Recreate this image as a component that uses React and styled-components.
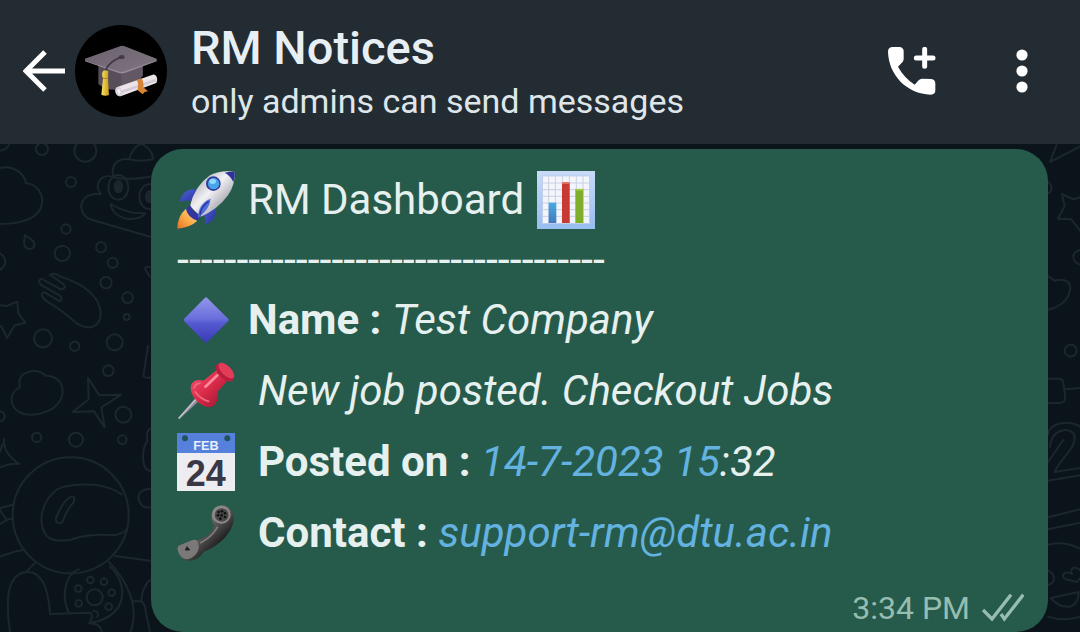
import React from "react";
import styled, { createGlobalStyle } from "styled-components";

const GlobalStyle = createGlobalStyle`
  *, *::before, *::after { box-sizing: border-box; }
  body {
    margin: 0;
    background: #0b141a;
    color: #e6f0ef;
    font-family: Roboto, "Liberation Sans", sans-serif;
  }
`;

const Page = styled.div`
  display: flex;
  flex-direction: column;
  min-height: 100vh;
  overflow: hidden;
`;

const Header = styled.header`
  display: flex;
  align-items: center;
  padding: 16px 52px 18px 23px;
  background: #242c33;
`;

const IconButton = styled.button`
  display: flex;
  flex: none;
  padding: 0;
  border: 0;
  background: none;
  color: #fff;
  cursor: pointer;
  margin-left: ${(p) => p.$gap || 0}px;
  svg { display: block; }
`;

const Avatar = styled.svg`
  flex: none;
  width: 92px;
  height: 92px;
  margin: 0 24px 0 10px;
  border-radius: 50%;
  background: #000;
`;

const Titles = styled.div`
  flex: 1;
  min-width: 0;
  padding-top: 4px;
  white-space: nowrap;
`;

const Title = styled.h1`
  margin: 0;
  font-size: 47px;
  line-height: 56px;
  font-weight: 500;
  color: #e8eff4;
`;

const Subtitle = styled.p`
  margin: 0;
  font-size: 34px;
  line-height: 50px;
  color: #dfe6ea;
`;

const Chat = styled.main`
  position: relative;
  flex: 1;
  padding: 5px 32px 0 151px;
`;

const Wallpaper = styled.svg`
  position: absolute;
  inset: 0;
  width: 100%;
  height: 100%;
  fill: none;
  stroke: #1c262d;
  stroke-width: 6;
  stroke-linecap: round;
  stroke-linejoin: round;
`;

const Bubble = styled.article`
  position: relative;
  padding: 15px 24px 4px 26px;
  border-radius: 32px;
  background: #265b4b;
`;

const Line = styled.p`
  display: flex;
  align-items: center;
  gap: ${(p) => (p.$wide ? 23 : 13)}px;
  margin: 0;
  font-size: 42px;
  line-height: 71px;
  white-space: pre;
`;

const Divider = styled.p`
  margin: 0;
  font-size: 43px;
  line-height: 49px;
  white-space: pre;
`;

const Emoji = styled.svg`
  flex: none;
  width: 58px;
  height: 58px;
  overflow: visible;
`;

const Link = styled.a`
  color: #64b2e0;
  text-decoration: none;
`;

const Meta = styled.footer`
  display: flex;
  justify-content: flex-end;
  align-items: center;
  gap: 12px;
  margin-top: 20px;
  font-size: 32px;
  line-height: 40px;
  color: #97bdb0;
`;

function Doodles() {
  return (
    <Wallpaper viewBox="0 144 1080 488" preserveAspectRatio="xMinYMin slice" aria-hidden="true">
      <g transform="translate(0 140) scale(.33333)">
        <circle cx="126" cy="27" r="18" />
        <circle cx="256" cy="32" r="33" />
        <path d="M0 32Q18 30 27 15M0 84C35 74 72 96 78 130C110 132 130 162 126 190C120 232 72 252 0 252" />
        <circle cx="213" cy="126" r="15" />
        <circle cx="198" cy="267" r="14" />
        <path d="M75 286C95 296 108 308 102 320C94 332 72 328 72 306Z" />
        <circle cx="187" cy="340" r="23" />
        <circle cx="303" cy="322" r="15" />
        <circle cx="338" cy="368" r="15" />
        <circle cx="318" cy="428" r="17" />
        <circle cx="383" cy="473" r="16" />
        <circle cx="380" cy="531" r="9" />
        <circle cx="129" cy="595" r="27" />
        <circle cx="224" cy="619" r="14" />
        <circle cx="344" cy="607" r="24" />
        <circle cx="325" cy="692" r="16" />
        <path d="M0 340Q16 352 16 365T0 390" />
        <path d="M0 496L20 498L52 485L55 520L76 548L44 556L21 594L5 560L0 558" />
        <path d="M150 404Q165 396 182 410C230 425 275 450 295 490C312 530 296 565 262 562C225 560 200 515 150 490C120 472 120 455 135 458L180 484Q190 476 178 466L122 434Q112 420 124 416L182 448Q202 446 190 432Z" />
        <path d="M450 290L270 238C225 215 240 155 302 162C278 128 310 98 340 112C330 70 360 52 388 58C396 20 425 8 430 14Q462 34 458 58Q420 66 388 58M340 112Q390 122 450 110" />
        <ellipse cx="355" cy="142" rx="30" ry="37" />
        <ellipse cx="355" cy="140" rx="11" ry="17" fill="#1c262d" />
        <ellipse cx="448" cy="170" rx="30" ry="37" />
        <ellipse cx="448" cy="170" rx="10" ry="17" fill="#1c262d" />
        <path d="M332 192Q380 222 436 220Q420 240 380 236Q336 225 332 192Z" />
        <path d="M450 382Q430 376 438 392L450 410M444 618L430 708Q440 716 450 712" />
      </g>
      <g transform="translate(0 380) scale(.33333)">
        <path d="M60 22C20 40 30 90 70 101C115 112 180 90 188 40C190 5 165 -14 137 -13C110 -38 55 -28 58 12Z" />
        <path d="M264 -6L298 46L364 44L304 82L314 142L282 94L218 96L266 58Z" />
        <circle cx="370" cy="104" r="24" />
        <circle cx="367" cy="179" r="13" />
        <circle cx="228" cy="179" r="21" />
        <circle cx="110" cy="172" r="14" />
        <path d="M0 94Q15 98 14 110T0 124M12 176Q8 220 58 252Q28 248 0 262M0 216L8 192" />
        <circle cx="212" cy="406" r="174" />
        <path d="M364 343C320 310 250 308 190 320C145 335 120 390 125 430C132 480 160 486 210 480C260 460 310 465 345 465Q365 464 382 446" />
        <path d="M214 350Q228 348 220 368Q200 390 190 420Q184 434 172 428Q162 420 176 396Q195 355 214 350Z" />
        <path d="M0 384L38 374M0 390L20 420L0 432M20 420L40 414M0 530Q35 515 68 510M106 548L78 576C40 580 25 620 24 660Q22 710 30 756M78 576C120 572 145 615 150 702L268 698Q284 700 268 730Q300 730 306 756M345 528L450 542M326 545C380 600 420 680 392 756M400 664H424Q426 620 450 600M424 664Q436 672 436 690L450 756" />
        <path d="M206 698C180 640 200 580 236 568M330 560C365 590 378 640 356 680Q330 720 272 728" />
        <circle cx="284" cy="652" r="24" />
        <circle cx="271" cy="600" r="10" /><circle cx="312" cy="605" r="10" />
        <circle cx="335" cy="638" r="10" /><circle cx="326" cy="680" r="10" />
        <circle cx="235" cy="626" r="10" /><circle cx="236" cy="670" r="10" />
        <path d="M280 692Q300 695 292 710M450 146Q438 154 442 184Q426 205 430 244Q434 270 450 272M450 326Q412 330 416 358Q422 386 450 382" />
      </g>
      <g transform="translate(1020 140) scale(.33333)">
        <path d="M110 14L90 66L180 20M82 124Q100 138 92 155L82 162" />
        <path d="M180 172L160 178L126 162L134 198L114 236L154 238L180 272" />
        <path d="M180 330Q158 336 160 352T180 374M82 408Q96 414 102 422C140 412 158 430 148 458C142 485 110 504 82 510" />
        <circle cx="152" cy="632" r="18" />
        <path d="M82 716H118Q128 716 130 728L136 774Q134 790 120 788L82 790M134 748L180 744" />
        <path d="M84 884C90 845 150 840 180 860M90 920C94 860 160 860 164 890C166 930 120 955 104 996L180 984M84 966L130 900M84 1022L180 1006M84 1132L180 1108M84 1168L180 1148M84 1214Q130 1202 180 1226M84 1430Q130 1446 180 1430" />
        <path d="M180 1290C155 1270 150 1295 156 1302C130 1290 120 1310 138 1318L172 1326L180 1314M84 1292Q102 1300 102 1315T84 1335M92 1374L176 1356Q176 1392 150 1400Q118 1404 92 1374Z" />
      </g>
    </Wallpaper>
  );
}

function CapAvatar() {
  return (
    <Avatar viewBox="225 73 276 276" role="img" aria-label="RM Notices">
      <defs>
        <linearGradient id="capTop" x1="0" y1="0" x2="1" y2="1">
          <stop offset="0" stopColor="#6c626f" /><stop offset="1" stopColor="#7f7580" />
        </linearGradient>
        <linearGradient id="tassel"><stop offset="0" stopColor="#f7e364" /><stop offset="1" stopColor="#c99a1a" /></linearGradient>
      </defs>
      <path d="M295 190V250Q320 272 362 266Q400 262 428 226V190L362 214Z" fill="#574e5a" />
      <path d="M364 214L428 192V226L364 266Z" fill="#625864" />
      <path d="M255 174L362 136Q368 134 374 137L470 174V180L374 214Q364 217 354 213L255 179Z" fill="url(#capTop)" />
      <path d="M255 179L354 212Q364 216 374 212L470 179V182L374 217Q364 220 354 216L255 182Z" fill="#968b96" />
      <ellipse cx="365" cy="169" rx="9" ry="6" fill="#453b48" />
      <path d="M362 170Q325 184 317 210" fill="none" stroke="#3f3542" strokeWidth="5" />
      <path d="M310 210Q317 206 325 212L324 234L327 283Q315 288 304 282L309 234Q303 218 310 210Z" fill="url(#tassel)" />
      <path d="M308 233H326" stroke="#a98018" strokeWidth="3" />
      <path d="M352 259L458 222Q468 220 471 233Q473 244 467 248L362 287Q350 288 346 274Q344 263 352 259Z" fill="#ebe5ea" />
      <path d="M358 276L468 238" stroke="#d3cbd4" strokeWidth="8" />
      <ellipse cx="357" cy="273" rx="9" ry="14" transform="rotate(-18 357 273)" fill="#d9d1da" />
      <ellipse cx="357" cy="273" rx="4" ry="8" transform="rotate(-18 357 273)" fill="#f7f3f7" />
      <path d="M410 238L424 233Q432 243 430 260L444 272L434 274L428 281L412 268Q418 252 410 238Z" fill="#d98335" />
    </Avatar>
  );
}

function Rocket() {
  return (
    <Emoji viewBox="51 31 174 174" role="img" aria-label="rocket">
      <defs>
        <linearGradient id="hull" x1="0" y1="0" x2="1" y2="1">
          <stop offset=".2" stopColor="#b9bac4" /><stop offset=".45" stopColor="#f2f2f5" /><stop offset=".8" stopColor="#9a9aa4" />
        </linearGradient>
        <linearGradient id="flame" x1="1" y1="0" x2="0" y2="1">
          <stop offset="0" stopColor="#ffe08a" /><stop offset=".6" stopColor="#f7a440" /><stop offset="1" stopColor="#e0702a" />
        </linearGradient>
        <linearGradient id="fin" x1="0" y1="0" x2="1" y2="1">
          <stop offset="0" stopColor="#4a64d4" /><stop offset="1" stopColor="#2a2fa0" />
        </linearGradient>
      </defs>
      <path d="M58 124Q68 88 98 86L124 86L94 122Q76 116 58 124Z" fill="url(#fin)" />
      <path d="M134 190Q170 184 166 144L162 132L128 158Q140 174 134 190Z" fill="url(#fin)" />
      <path d="M78 144Q52 166 52 204Q92 200 112 180Z" fill="url(#flame)" />
      <path d="M90 136Q104 76 150 44Q186 26 224 34Q226 72 204 104Q172 148 122 168Z" fill="url(#hull)" />
      <path d="M194 36Q212 32 224 34Q226 48 220 64Q212 46 194 36Z" fill="#30329c" />
      <path d="M90 132Q98 156 124 164L112 180Q84 172 78 146Z" fill="#3434a0" />
      <path d="M114 172Q114 128 152 114Q150 144 114 172Z" fill="#4e70dc" />
      <path d="M120 162Q124 138 146 122" fill="none" stroke="#2b2e9c" strokeWidth="4" />
      <circle cx="160" cy="69" r="22" fill="#343a9c" />
      <circle cx="161" cy="69" r="17" fill="#45a5e8" />
      <ellipse cx="158" cy="62" rx="10" ry="8" fill="#8fd8fa" />
    </Emoji>
  );
}

function Chart() {
  const grid = [1165, 1185, 1206, 1227, 1248, 1268];
  const rows = [68, 88, 108, 128, 148, 168];
  return (
    <Emoji viewBox="1130 32 174 174" role="img" aria-label="bar chart">
      <defs>
        <linearGradient id="frame" x1="0" y1="0" x2="0" y2="1"><stop offset="0" stopColor="#c8dbf7" /><stop offset="1" stopColor="#98bdf0" /></linearGradient>
        <linearGradient id="bBlue" x1="0" y1="0" x2="0" y2="1"><stop offset="0" stopColor="#4aaae0" /><stop offset="1" stopColor="#3f79bf" /></linearGradient>
      </defs>
      <rect x="1130" y="32" width="174" height="174" fill="url(#frame)" />
      <rect x="1146" y="47" width="142" height="143" fill="#f4f5fb" stroke="#b0c4e4" strokeWidth="2" />
      {grid.map((x) => <path key={x} d={`M${x} 47V190`} stroke="#c9d0e3" strokeWidth="3" />)}
      {rows.map((y) => <path key={y} d={`M1146 ${y}H1288`} stroke="#c9d0e3" strokeWidth="3" />)}
      <rect x="1165" y="127" width="23" height="61" fill="url(#bBlue)" />
      <rect x="1205" y="66" width="23" height="122" fill="#c73a34" />
      <rect x="1245" y="86" width="24" height="102" fill="#7fae2a" />
      <path d="M1205 68h23" stroke="#e8756c" strokeWidth="5" />
      <path d="M1245 88h24" stroke="#a8cf4c" strokeWidth="5" />
    </Emoji>
  );
}

function Diamond() {
  return (
    <Emoji viewBox="36 17 174 174" role="img" aria-label="blue diamond">
      <defs><linearGradient id="dia" x1="0" y1="0" x2="0" y2="1"><stop offset="0" stopColor="#9497ea" /><stop offset=".48" stopColor="#686ddc" /><stop offset=".56" stopColor="#555ad0" /><stop offset="1" stopColor="#3a3ab8" /></linearGradient></defs>
      <path d="M120 37Q123 34 126 37L190 101Q193 104 190 107L126 171Q123 174 120 171L57 107Q54 104 57 101Z" fill="url(#dia)" />
    </Emoji>
  );
}

function Pin() {
  return (
    <Emoji viewBox="37 226 174 174" role="img" aria-label="pushpin">
      <defs>
        <linearGradient id="pinBody" x1="0" y1="0" x2="1" y2="1"><stop offset="0" stopColor="#f5566e" /><stop offset=".5" stopColor="#d92a48" /><stop offset="1" stopColor="#8f1430" /></linearGradient>
      </defs>
      <path d="M92 334L102 344L44 398L41 394Z" fill="#8f8b9b" />
      <path d="M94 338L42 395" stroke="#cfcad6" strokeWidth="4" />
      <path d="M78 306C78 284 96 276 116 282L156 250L188 282L158 316C164 342 150 362 132 362C104 358 80 330 78 306Z" fill="url(#pinBody)" />
      <ellipse cx="181" cy="257" rx="34" ry="19" transform="rotate(45 181 257)" fill="#b91d3c" />
      <ellipse cx="185" cy="252" rx="30" ry="14" transform="rotate(45 185 252)" fill="#e23c58" />
      <path d="M122 300L158 266" stroke="#ff8a9e" strokeWidth="8" strokeLinecap="round" />
      <path d="M88 304Q92 290 106 290M92 316Q108 338 132 344" fill="none" stroke="#f26a82" strokeWidth="5" strokeLinecap="round" />
    </Emoji>
  );
}

function Calendar() {
  return (
    <Emoji viewBox="36 21 174 174" role="img" aria-label="calendar" fontFamily="Liberation Sans, sans-serif" fontWeight="700">
      <rect x="36" y="21" width="174" height="174" fill="#ececf1" />
      <rect x="36" y="21" width="174" height="60" fill="#5580dc" />
      <circle cx="60" cy="37" r="9" fill="#24525c" />
      <circle cx="187" cy="37" r="9" fill="#24525c" />
      <text x="123" y="73" textAnchor="middle" fontSize="38" fill="#e9effc">FEB</text>
      <text x="122" y="181" textAnchor="middle" fontSize="108" fill="#3a3844">24</text>
    </Emoji>
  );
}

function Receiver() {
  return (
    <Emoji viewBox="37 234 174 174" role="img" aria-label="telephone receiver">
      <defs>
        <linearGradient id="tube" x1="0" y1="0" x2="1" y2="1"><stop offset=".3" stopColor="#8a8988" /><stop offset=".55" stopColor="#4c4b4b" /><stop offset=".75" stopColor="#161616" /></linearGradient>
      </defs>
      <path d="M40 374Q36 362 46 358L84 342Q92 340 98 344C124 334 144 318 148 298C138 282 138 258 150 246C166 234 184 236 196 248Q210 262 207 284C200 322 168 356 116 378C108 394 90 404 74 404C54 402 44 392 40 374Z" fill="url(#tube)" />
      <path d="M40 374Q36 362 46 358L84 342Q92 340 98 344Q106 360 100 374Q92 392 70 400Q46 398 40 374Z" fill="#7b7978" />
      <path d="M62 372L67 362L75 372Z" fill="#222" stroke="#222" strokeWidth="3" />
      <ellipse cx="170" cy="266" rx="28" ry="27" fill="#8c8a88" />
      <ellipse cx="171" cy="267" rx="21" ry="20" fill="#4a4949" />
      {[[162, 258], [172, 256], [181, 262], [160, 268], [171, 268], [181, 273], [167, 278]].map(([x, y]) => (
        <circle key={`${x}-${y}`} cx={x} cy={y} r="4" fill="#111" />
      ))}
      <path d="M158 304Q140 334 108 350" fill="none" stroke="#a5a3a2" strokeWidth="5" strokeLinecap="round" opacity=".6" />
    </Emoji>
  );
}

export default function App() {
  return (
    <Page>
      <GlobalStyle />
      <Header>
        <IconButton aria-label="Back">
          <svg width="42" height="42" viewBox="0 0 42 42" fill="none" stroke="currentColor" strokeWidth="5">
            <path d="M42 21H4M22 2L3 21L22 40" />
          </svg>
        </IconButton>
        <CapAvatar />
        <Titles>
          <Title>RM Notices</Title>
          <Subtitle>only admins can send messages</Subtitle>
        </Titles>
        <IconButton aria-label="Add call">
          <svg width="48" height="48" viewBox="84 82 144 144" fill="currentColor">
            <path d="M96 82H118Q130 83 131 94V118Q131 124 127 128L114 141Q132 174 164 195L176 182Q180 178 186 177L214 178Q226 180 226 192V212Q226 225 212 225C140 222 86 166 84 96Q84 84 96 82Z" />
            <path d="M194 89V140M169 115H219" stroke="currentColor" strokeWidth="15" strokeLinecap="round" />
          </svg>
        </IconButton>
        <IconButton aria-label="More options" $gap={80}>
          <svg width="12" height="44" viewBox="0 0 12 44" fill="currentColor">
            <circle cx="6" cy="6" r="5.6" /><circle cx="6" cy="22" r="5.6" /><circle cx="6" cy="38" r="5.6" />
          </svg>
        </IconButton>
      </Header>
      <Chat>
        <Doodles />
        <Bubble>
          <Line><Rocket /><span>RM Dashboard</span><Chart /></Line>
          <Divider>------------------------------------</Divider>
          <Line><Diamond /><span><b>Name :</b> <i>Test Company</i></span></Line>
          <Line $wide><Pin /><i>New job posted. Checkout Jobs</i></Line>
          <Line $wide><Calendar /><span><b>Posted on :</b> <i><Link href="tel:147202315">14-7-2023 15</Link>:32</i></span></Line>
          <Line $wide><Receiver /><span><b>Contact :</b> <i><Link href="mailto:support-rm@dtu.ac.in">support-rm@dtu.ac.in</Link></i></span></Line>
          <Meta>
            <time>3:34 PM</time>
            <svg width="42" height="28" viewBox="426 70 126 84" fill="none" stroke="currentColor" strokeWidth="10" role="img" aria-label="Delivered">
              <path d="M429 118L456 145L513 72M483 130L493 145L550 72" />
            </svg>
          </Meta>
        </Bubble>
      </Chat>
    </Page>
  );
}
